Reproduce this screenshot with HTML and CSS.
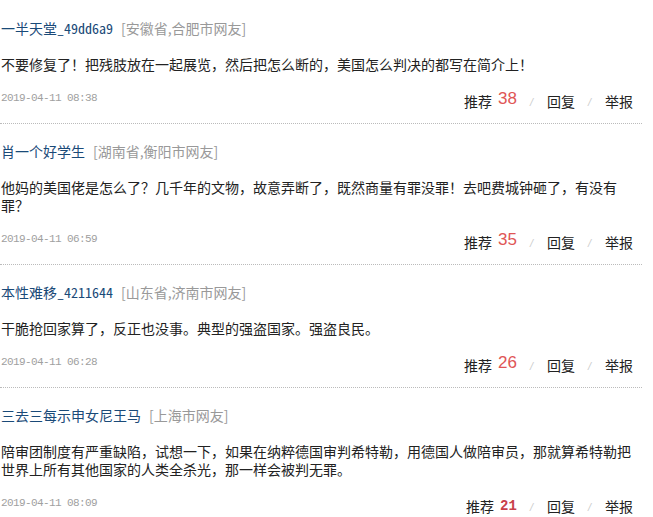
FILE: index.html
```html
<!DOCTYPE html>
<html lang="zh-CN">
<head>
    <meta charset="UTF-8">
    <meta name="viewport" content="width=device-width, initial-scale=1.0">
    <title>网友评论</title>
    <link rel="stylesheet" href="styles.css">
</head>
<body>
<div class="comments">
    <div class="item">
        <div class="user"><a class="name" href="#">一半天堂_49dd6a9</a><span class="area">[安徽省,合肥市网友]</span></div>
        <p class="content">不要修复了！把残肢放在一起展览，然后把怎么断的，美国怎么判决的都写在简介上！</p>
        <div class="footer">
            <span class="date">2019-04-11 08:38</span>
            <span class="actions"><a href="#">推荐</a><span class="num">38</span><span class="sep">/</span><a href="#">回复</a><span class="sep">/</span><a href="#">举报</a></span>
        </div>
    </div>
    <div class="item">
        <div class="user"><a class="name" href="#">肖一个好学生</a><span class="area">[湖南省,衡阳市网友]</span></div>
        <p class="content">他妈的美国佬是怎么了？几千年的文物，故意弄断了，既然商量有罪没罪！去吧费城钟砸了，有没有罪？</p>
        <div class="footer">
            <span class="date">2019-04-11 06:59</span>
            <span class="actions"><a href="#">推荐</a><span class="num">35</span><span class="sep">/</span><a href="#">回复</a><span class="sep">/</span><a href="#">举报</a></span>
        </div>
    </div>
    <div class="item">
        <div class="user"><a class="name" href="#">本性难移_4211644</a><span class="area">[山东省,济南市网友]</span></div>
        <p class="content">干脆抢回家算了，反正也没事。典型的强盗国家。强盗良民。</p>
        <div class="footer">
            <span class="date">2019-04-11 06:28</span>
            <span class="actions"><a href="#">推荐</a><span class="num">26</span><span class="sep">/</span><a href="#">回复</a><span class="sep">/</span><a href="#">举报</a></span>
        </div>
    </div>
    <div class="item">
        <div class="user"><a class="name" href="#">三去三每示申女尼王马</a><span class="area">[上海市网友]</span></div>
        <p class="content">陪审团制度有严重缺陷，试想一下，如果在纳粹德国审判希特勒，用德国人做陪审员，那就算希特勒把世界上所有其他国家的人类全杀光，那一样会被判无罪。</p>
        <div class="footer">
            <span class="date">2019-04-11 08:09</span>
            <span class="actions"><a href="#">推荐</a><span class="num bold">21</span><span class="sep">/</span><a href="#">回复</a><span class="sep">/</span><a href="#">举报</a></span>
        </div>
    </div>
</div>
</body>
</html>
```

FILE: styles.css
```css
body {
    margin: 0;
    padding-top: 1px;
    background: #fff;
    font-family: "Noto Sans CJK SC", sans-serif;
    font-size: 14px;
    color: #333;
}
a {
    text-decoration: none;
}
.comments {
    width: 642px;
}
.item {
    padding: 17px 0 12px 1px;
    border-bottom: 1px dotted #bbb;
}
.item:last-child {
    border-bottom: none;
}
.user {
    line-height: 20px;
    white-space: nowrap;
}
.name {
    color: #1a4a78;
    font-family: "Noto Sans Mono CJK SC", "Noto Sans CJK SC", sans-serif;
}
.area {
    margin-left: 8px;
    color: #999;
}
.content {
    margin: 17px 0 0;
    width: 634px;
    line-height: 18px;
    color: #222;
}
.footer {
    display: flex;
    justify-content: space-between;
    margin-top: 18px;
    padding-right: 9px;
    height: 20px;
}
.date {
    line-height: 14px;
    font-family: "Liberation Mono", monospace;
    font-size: 11px;
    letter-spacing: -0.6px;
    color: #a0a0a0;
}
.actions {
    display: flex;
    align-items: center;
    line-height: 20px;
}
.actions a {
    color: #222;
}
.num {
    margin: -4px 0 0 6px;
    font-family: "Liberation Sans", sans-serif;
    font-size: 17px;
    color: #e05555;
}
.num.bold {
    margin-top: 0;
    font-family: "Liberation Mono", monospace;
    font-size: 14px;
    font-weight: bold;
    color: #c8404a;
}
.sep {
    margin: 2px 14px 0 13px;
    font-family: "Liberation Sans", sans-serif;
    font-size: 11px;
    font-style: italic;
    color: #ccc;
}
```
